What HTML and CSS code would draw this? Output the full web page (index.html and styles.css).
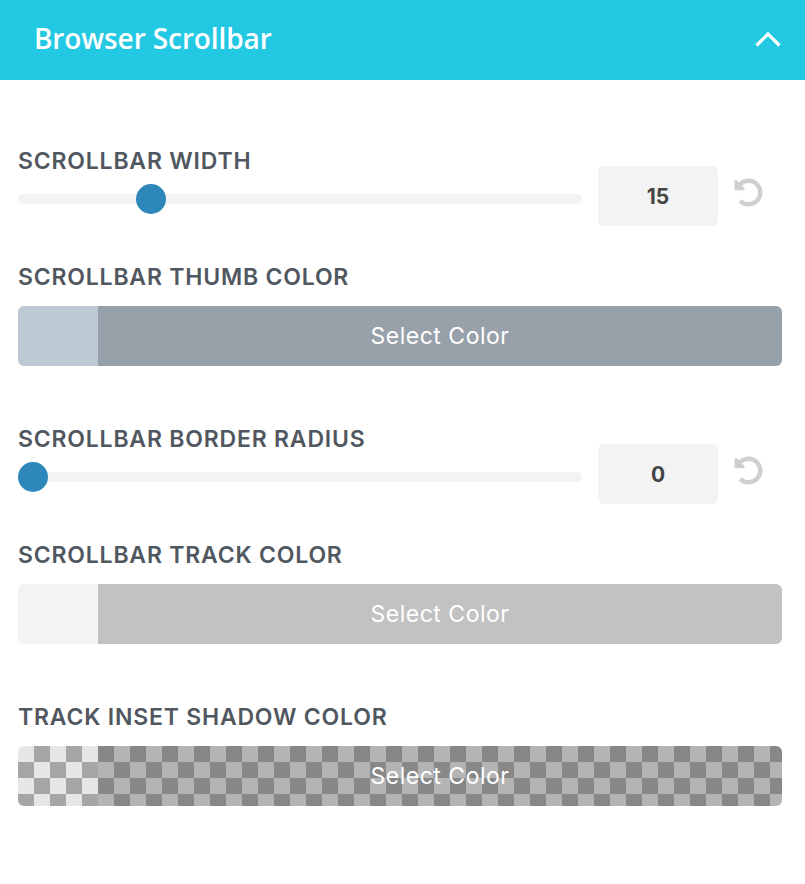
FILE: index.html
```html
<!DOCTYPE html>
<html lang="en">
<head>
    <meta charset="UTF-8">
    <title>Browser Scrollbar</title>
    <meta name="viewport" content="width=device-width, initial-scale=1.0">
    <link rel="stylesheet" href="styles.css">
</head>
<body>
    <div class="panel">
        <div class="panel-header">
            <h2 class="panel-title">Browser Scrollbar</h2>
            <button class="toggle" aria-label="Collapse">
                <svg width="26" height="16" viewBox="0 0 26 16"><polyline points="1.5,14.5 13,3 24.5,14.5" fill="none" stroke="#fff" stroke-width="3.2"/></svg>
            </button>
        </div>
        <div class="panel-body">
            <div class="field field-range">
                <div class="range-main">
                    <label class="field-label">Scrollbar Width</label>
                    <input type="range" class="range" min="0" max="68" value="15">
                </div>
                <div class="range-value">15</div>
                <button class="reset" aria-label="Reset">
                    <svg width="29" height="29" viewBox="0 0 512 512"><path fill="currentColor" d="M255.5 8c-66.3.1-126.4 26.2-170.9 68.7L49 41C33.9 25.9 8 36.6 8 57.9V192c0 13.3 10.7 24 24 24h134.1c21.4 0 32.1-25.9 17-41l-41.8-41.8c30.9-28.9 70.8-44.9 113.2-45.3 92.4-.8 170.3 74 169.5 169.4C423.2 348 349.8 424 256 424c-41.1 0-80-14.7-110.6-41.6-4.7-4.2-11.9-3.9-16.4.6l-39.7 39.7c-4.9 4.9-4.6 12.8.5 17.4C133.8 479.8 192.1 504 256 504c137 0 248-111 248-248C504 119.2 392.4 7.8 255.5 8z"/></svg>
                </button>
            </div>

            <div class="field field-color">
                <label class="field-label">Scrollbar Thumb Color</label>
                <div class="color-btn color-thumb">
                    <span class="swatch"></span>
                    <span class="color-text">Select Color</span>
                </div>
            </div>

            <div class="field field-range">
                <div class="range-main">
                    <label class="field-label">Scrollbar Border Radius</label>
                    <input type="range" class="range" min="0" max="68" value="0">
                </div>
                <div class="range-value">0</div>
                <button class="reset" aria-label="Reset">
                    <svg width="29" height="29" viewBox="0 0 512 512"><path fill="currentColor" d="M255.5 8c-66.3.1-126.4 26.2-170.9 68.7L49 41C33.9 25.9 8 36.6 8 57.9V192c0 13.3 10.7 24 24 24h134.1c21.4 0 32.1-25.9 17-41l-41.8-41.8c30.9-28.9 70.8-44.9 113.2-45.3 92.4-.8 170.3 74 169.5 169.4C423.2 348 349.8 424 256 424c-41.1 0-80-14.7-110.6-41.6-4.7-4.2-11.9-3.9-16.4.6l-39.7 39.7c-4.9 4.9-4.6 12.8.5 17.4C133.8 479.8 192.1 504 256 504c137 0 248-111 248-248C504 119.2 392.4 7.8 255.5 8z"/></svg>
                </button>
            </div>

            <div class="field field-color">
                <label class="field-label">Scrollbar Track Color</label>
                <div class="color-btn color-track">
                    <span class="swatch"></span>
                    <span class="color-text">Select Color</span>
                </div>
            </div>

            <div class="field field-color">
                <label class="field-label">Track Inset Shadow Color</label>
                <div class="color-btn color-shadow">
                    <span class="swatch"></span>
                    <span class="color-text">Select Color</span>
                </div>
            </div>
        </div>
    </div>
</body>
</html>
```

FILE: styles.css
```css
body {
    margin: 0;
    padding: 0;
    background: #fff;
    font-family: Inter, "Liberation Sans", sans-serif;
}
.panel-header {
    display: flex;
    align-items: center;
    justify-content: space-between;
    height: 80px;
    box-sizing: border-box;
    padding: 0 24px 5px 34px;
    background-color: #23c9e3;
}
.panel-title {
    margin: 0;
    color: #fff;
    font-family: "Open Sans", sans-serif;
    font-weight: 600;
    font-size: 28px;
    letter-spacing: -0.1px;
}
.toggle {
    display: flex;
    padding: 0;
    border: none;
    background: none;
    margin-top: 3px;
}
.panel-body {
    padding: 67px 23px 40px 18px;
}
.field-label {
    display: block;
    color: #51575f;
    font-size: 23px;
    font-weight: 600;
    line-height: 28px;
    letter-spacing: 0.8px;
    text-transform: uppercase;
}
.field-range {
    display: flex;
    align-items: flex-end;
    gap: 16px;
    margin-bottom: 37px;
}
.range-main {
    flex: 1;
    padding-bottom: 12px;
}
.range-main .field-label {
    margin-bottom: 9px;
}
.range {
    -webkit-appearance: none;
    appearance: none;
    display: block;
    width: 100%;
    height: 30px;
    margin: 0;
    background: transparent;
}
.range::-webkit-slider-runnable-track {
    height: 10px;
    border-radius: 5px;
    background: #f3f3f3;
}
.range::-webkit-slider-thumb {
    -webkit-appearance: none;
    width: 30px;
    height: 30px;
    margin-top: -10px;
    border: none;
    border-radius: 50%;
    background: #2e87ba;
}
.range-value {
    display: flex;
    align-items: center;
    justify-content: center;
    width: 120px;
    height: 60px;
    border-radius: 6px;
    background: #f3f3f3;
    color: #444;
    font-size: 21px;
    font-weight: 700;
}
.reset {
    display: flex;
    align-self: flex-end;
    width: 48px;
    margin-bottom: 19px;
    padding: 0;
    border: none;
    background: none;
    color: #cfcfcf;
}
.field-color {
    margin-bottom: 59px;
}
.field-color .field-label {
    margin-bottom: 15px;
}
.color-btn {
    display: flex;
    height: 60px;
    border-radius: 6px;
    overflow: hidden;
}
.swatch {
    width: 80px;
}
.color-text {
    flex: 1;
    display: flex;
    align-items: center;
    justify-content: center;
    color: #fff;
    font-size: 23px;
    letter-spacing: 0.5px;
}
.color-thumb .swatch {
    background: #bcc8d4;
}
.color-thumb .color-text {
    background: #98a0aa;
}
.color-track .swatch {
    background: #f3f3f3;
}
.color-track .color-text {
    background: #c2c2c2;
}
.color-shadow .swatch {
    background: conic-gradient(#a6a6a6 25%, #e6e6e6 0 50%, #a6a6a6 0 75%, #e6e6e6 0);
    background-size: 32px 32px;
}
.color-shadow .color-text {
    background: conic-gradient(#b4b4b4 25%, #888 0 50%, #b4b4b4 0 75%, #888 0);
    background-size: 32px 32px;
}
```
